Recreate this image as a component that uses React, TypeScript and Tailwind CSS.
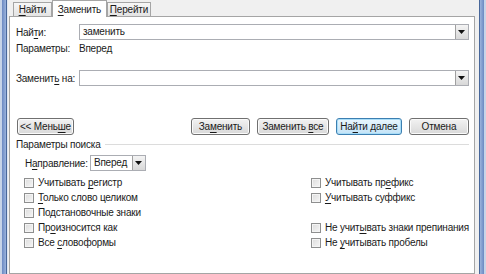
import React from "react";

const font = { fontFamily: '"Liberation Sans", Arial, sans-serif' };

function U({ children }: { children: React.ReactNode }) {
  return <span className="underline underline-offset-[2px] decoration-[1px]">{children}</span>;
}

function Arrow() {
  return (
    <svg width="7" height="4" viewBox="0 0 7 4">
      <path d="M0 0h7L3.5 4z" fill="#111" />
    </svg>
  );
}

function DropBtn() {
  return (
    <div className="w-[13px] h-full flex items-center justify-center border-l border-[#a0a0a0] bg-gradient-to-b from-[#f4f4f4] to-[#d8d8d8]">
      <Arrow />
    </div>
  );
}

function Combo({ value }: { value: string }) {
  return (
    <div className="flex-1 h-[16px] flex border border-[#abadb3] bg-white">
      <div className="flex-1 pl-[3px] leading-[14px]">{value}</div>
      <DropBtn />
    </div>
  );
}

function Btn({ children, w, primary }: { children: React.ReactNode; w: string; primary?: boolean }) {
  return (
    <div
      className={`${w} h-[17px] flex items-center justify-center rounded-[3px] border ${
        primary
          ? "border-[#3c7fb1] bg-gradient-to-b from-[#eaf6fd] to-[#c2e3f7] shadow-[inset_0_0_0_1px_#a8ddf8]"
          : "border-[#707070] bg-gradient-to-b from-[#f2f2f2] to-[#d9d9d9] shadow-[inset_0_0_0_1px_#fbfbfb]"
      }`}
    >
      <span>{children}</span>
    </div>
  );
}

function Check({ children }: { children: React.ReactNode }) {
  return (
    <div className="h-[15px] flex items-center gap-[4px]">
      <div className="w-[10px] h-[10px] shrink-0 border border-[#8e8f8f] bg-gradient-to-br from-[#dcdcdc] to-[#f6f6f6] shadow-[inset_0_0_0_1px_#f4f4f4]" />
      <span>{children}</span>
    </div>
  );
}

export default function App() {
  return (
    <div
      className="w-[486px] h-[274px] overflow-hidden flex bg-[#f0f0f0] text-[10px] tracking-[-0.2px] whitespace-nowrap text-[#1a1a1a]"
      style={font}
    >
      {/* левая рамка окна */}
      <div className="w-[2px] bg-[#c7d4e8]" />
      <div className="w-[5px] bg-gradient-to-r from-[#6b89c2] to-[#9bb3dc]" />
      <div className="w-[1px] bg-[#48679a]" />
      <div className="w-[1px] bg-[#dfe6f1]" />

      <div className="flex-1 flex flex-col pl-[1px] pr-[4px]">
        {/* вкладки */}
        <div className="h-[16px] flex items-end pl-[4px]">
          <div className="w-[39px] h-[14px] flex items-center justify-center border border-b-0 border-[#a5a5a5] bg-gradient-to-b from-[#f7f7f7] to-[#e3e3e3]">
            <span><U>Н</U>айти</span>
          </div>
          <div className="w-[55px] h-[17px] -mb-[1px] flex items-center justify-center border border-b-0 border-[#a5a5a5] bg-white relative z-10">
            <span><U>З</U>аменить</span>
          </div>
          <div className="w-[44px] h-[14px] flex items-center justify-center border border-b-0 border-[#a5a5a5] bg-gradient-to-b from-[#f7f7f7] to-[#e3e3e3]">
            <span><U>П</U>ерейти</span>
          </div>
        </div>

        {/* панель */}
        <div className="flex-1 bg-white border border-[#a5a5a5] pl-[6px] pr-[5px] flex flex-col">
          <div className="mt-[7px] flex items-center">
            <div className="w-[63px]">Най<U>т</U>и:</div>
            <Combo value="заменить" />
          </div>
          <div className="h-[16px] flex items-center">
            <div className="w-[63px]">Параметры:</div>
            <div>Вперед</div>
          </div>
          <div className="mt-[14px] flex items-center">
            <div className="w-[63px]">Заменит<U>ь</U> на:</div>
            <Combo value="" />
          </div>

          <div className="mt-[32px] flex items-center pl-[1px]">
            <Btn w="w-[57px]">&lt;&lt; Мень<U>ш</U>е</Btn>
            <div className="flex-1" />
            <div className="flex gap-[7px]">
              <Btn w="w-[59px]">За<U>м</U>енить</Btn>
              <Btn w="w-[72px]">Заменить <U>в</U>се</Btn>
              <Btn w="w-[66px]" primary>На<U>й</U>ти далее</Btn>
              <Btn w="w-[60px]">Отмена</Btn>
            </div>
          </div>

          <div className="mt-[2px] h-[14px] flex items-center gap-[4px]">
            <span>Параметры поиска</span>
            <div className="flex-1 h-[1px] bg-[#dcdcdc]" />
          </div>

          <div className="mt-[4px] pl-[9px] flex items-center">
            <div className="w-[65px]">Н<U>а</U>правление:</div>
            <div className="w-[56px] h-[16px] flex border border-[#abadb3] bg-white">
              <div className="flex-1 pl-[3px] leading-[14px]">Вперед</div>
              <DropBtn />
            </div>
          </div>

          <div className="mt-[4px] pl-[8px] grid grid-cols-[287px_1fr]">
            <Check>Учитывать <U>р</U>егистр</Check>
            <Check>Учитывать пр<U>е</U>фикс</Check>
            <Check><U>Т</U>олько слово целиком</Check>
            <Check><U>У</U>читывать суффикс</Check>
            <Check>Подстановочные знаки</Check>
            <div />
            <Check>Пр<U>о</U>износится как</Check>
            <Check>Не учит<U>ы</U>вать знаки препинания</Check>
            <Check>Все <U>с</U>ловоформы</Check>
            <Check>Не <U>у</U>читывать пробелы</Check>
          </div>
        </div>
      </div>

      {/* правая рамка окна */}
      <div className="w-[1px] bg-[#48679a]" />
      <div className="w-[5px] bg-gradient-to-r from-[#9bb3dc] to-[#6b89c2]" />
      <div className="w-[2px] bg-[#c7d4e8]" />
    </div>
  );
}
